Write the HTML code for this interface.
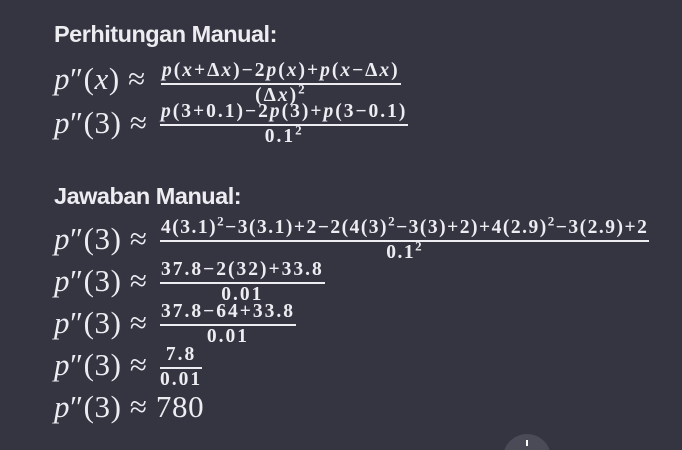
<!DOCTYPE html>
<html><head><meta charset="utf-8"><style>
html,body{margin:0;padding:0;background:#343541;width:682px;height:450px;overflow:hidden;color:#ececf1}
.wrap{position:relative;width:682px;height:450px;overflow:hidden}
.h{position:absolute;left:54px;font:bold 23.5px "Liberation Sans",sans-serif;letter-spacing:-0.5px}
.row{position:absolute;left:54px;font-family:"Liberation Serif",serif;white-space:nowrap}
.lhs{position:absolute;left:0;top:2px;font-size:31px;line-height:30px;letter-spacing:0.6px}
.fr{position:absolute;left:106px;text-align:center;font-size:19.5px;font-weight:bold;line-height:18px;letter-spacing:2px}
.fr .n{display:block;padding:0 1px}
.fr .l{display:block;height:1.5px;background:#ececf1;margin:3px 0 2px}
.fr .d{display:block}
i{font-style:italic}
sup{font-size:13px;line-height:0}
svg{position:absolute;left:500px;top:430px}
</style></head><body><div class="wrap">
<div class="h" style="top:21px">Perhitungan Manual:</div>
<div class="row" style="top:62px">
 <span class="lhs"><i>p</i>″(<i>x</i>) ≈</span>
 <span class="fr" style="top:0px;left:107px"><span class="n"><i>p</i>(<i>x</i>+Δ<i>x</i>)−2<i>p</i>(<i>x</i>)+<i>p</i>(<i>x</i>−Δ<i>x</i>)</span><span class="l"></span><span class="d">(Δ<i>x</i>)<sup>2</sup></span></span>
</div>
<div class="row" style="top:106px">
 <span class="lhs"><i>p</i>″(3) ≈</span>
 <span class="fr" style="top:-3px"><span class="n"><i>p</i>(3+0.1)−2<i>p</i>(3)+<i>p</i>(3−0.1)</span><span class="l"></span><span class="d">0.1<sup>2</sup></span></span>
</div>
<div class="h" style="top:183px">Jawaban Manual:</div>
<div class="row" style="top:222px">
 <span class="lhs"><i>p</i>″(3) ≈</span>
 <span class="fr" style="top:-3px;letter-spacing:1.5px"><span class="n">4(3.1)<sup>2</sup>−3(3.1)+2−2(4(3)<sup>2</sup>−3(3)+2)+4(2.9)<sup>2</sup>−3(2.9)+2</span><span class="l"></span><span class="d">0.1<sup>2</sup></span></span>
</div>
<div class="row" style="top:264px">
 <span class="lhs"><i>p</i>″(3) ≈</span>
 <span class="fr" style="top:-3px"><span class="n">37.8−2(32)+33.8</span><span class="l"></span><span class="d">0.01</span></span>
</div>
<div class="row" style="top:306px">
 <span class="lhs"><i>p</i>″(3) ≈</span>
 <span class="fr" style="top:-3px"><span class="n">37.8−64+33.8</span><span class="l"></span><span class="d">0.01</span></span>
</div>
<div class="row" style="top:348px">
 <span class="lhs"><i>p</i>″(3) ≈</span>
 <span class="fr" style="top:-2px"><span class="n">7.8</span><span class="l"></span><span class="d">0.01</span></span>
</div>
<div class="row" style="top:390px">
 <span class="lhs"><i>p</i>″(3) ≈ 780</span>
</div>
<svg width="56" height="20" viewBox="0 0 56 20"><circle cx="27" cy="28" r="24" fill="#4a4b56"/><rect x="26" y="10" width="2" height="6" fill="#fff"/></svg>
</div></body></html>
